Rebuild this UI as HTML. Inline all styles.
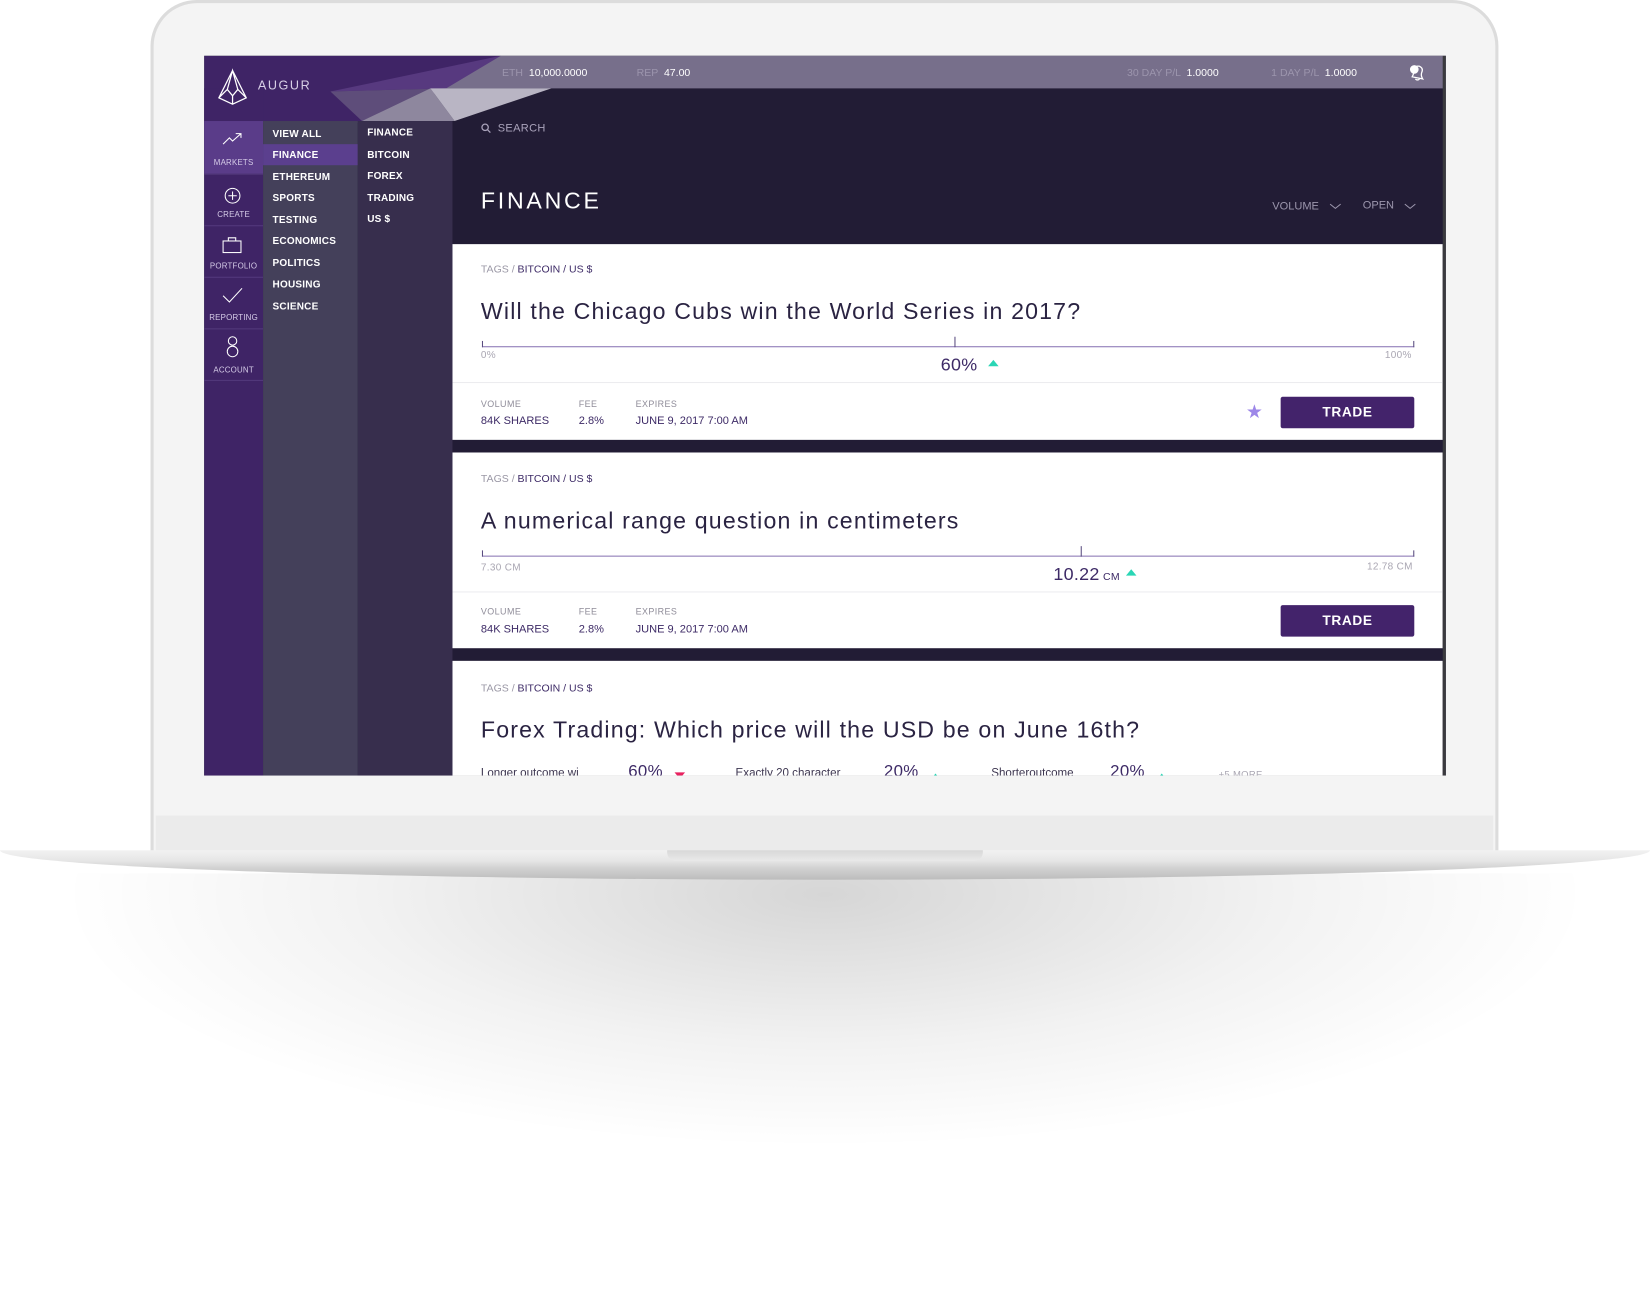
<!DOCTYPE html>
<html><head><meta charset="utf-8"><style>
*{margin:0;padding:0;box-sizing:border-box}
html,body{width:1650px;height:1296px;overflow:hidden;background:#fff;font-family:"Liberation Sans",sans-serif}
#w{position:absolute;left:0;top:0;width:1568px;height:1232px;transform:scale(1.0523);transform-origin:0 0}
.a{position:absolute}
.shadow{left:60px;top:830px;width:1448px;height:400px;background:radial-gradient(ellipse 50% 60% at 50% 5%,rgba(0,0,0,.16),rgba(0,0,0,.05) 60%,rgba(0,0,0,0) 100%)}
.lid{left:143px;top:0;width:1281px;height:812px;border-radius:44px 44px 0 0;background:#f4f4f4;border:3px solid #dcdcdc;border-bottom:none}
.chin{left:148px;top:775px;width:1271px;height:35px;background:#ebebeb}
.base{left:0;top:808px;width:1568px;height:28px;background:linear-gradient(#f2f2f2 0,#e6e6e6 35%,#d2d2d2 60%,#bcbcbc 100%);border-radius:0 0 50% 50%/0 0 100% 100%}
.notch{left:634px;top:808px;width:300px;height:10px;background:linear-gradient(#d8d8d8,#e9e9e9);border-radius:0 0 8px 8px}
.scr{left:194px;top:53px;width:1180px;height:684px;background:#221c35;overflow:hidden}
.t{position:absolute;white-space:nowrap;letter-spacing:.3px}
.cat{font-size:9.5px;font-weight:bold;color:#fff;letter-spacing:.2px}
.rail{font-size:7.5px;color:#d6cce8;letter-spacing:.2px;text-align:center;width:56px;left:0}
.lbl{font-size:8.5px;color:#8f8c99;letter-spacing:.4px}
.val{font-size:10.5px;color:#3d2a66;letter-spacing:0}
.q{font-size:22px;color:#2a2342;letter-spacing:1.1px}
.btn{position:absolute;width:127px;height:30px;background:#43236b;border-radius:2px;color:#fff;font-size:13px;font-weight:bold;letter-spacing:.6px;text-align:center;line-height:30px}
</style></head><body><div id="w">
<div class="a shadow"></div>
<div class="a lid"></div>
<div class="a chin"></div>
<div class="a base"></div>
<div class="a notch"></div>
<div class="a scr">
 <div class="a" style="left:0;top:0;width:1180px;height:31px;background:#776f8b"></div>
 <svg class="a" style="left:0;top:0" width="340" height="64">
  <polygon points="0,0 282,0 146,64 0,64" fill="#3f2466"/>
  <polygon points="120,34 282,0 230,31" fill="#57397f"/>
  <polygon points="120,34 230,31 150,62" fill="#5e4d7a"/>
  <polygon points="150,62 215,31 238,62" fill="#8e879e"/>
  <polygon points="215,31 330,31 238,62" fill="#b9b5c4"/>
 </svg>
 <div class="a" style="left:0;top:31px;width:56px;height:33px;background:#3f2466"></div>
 <svg class="a" style="left:10px;top:12px" width="34" height="36" viewBox="0 0 34 36" fill="none" stroke="#fff" stroke-width="1.2"><path d="M17 2 L30 28 L17 34 L4 28 Z M17 2 L12 20 L17 26 L22 20 Z M4 28 L12 20 M30 28 L22 20 M17 34 L17 26"/></svg>
 <div class="t" style="left:51px;top:21px;font-size:12px;color:#d8d0e6;letter-spacing:1.5px">AUGUR</div>
 <div class="t" style="left:283px;top:11px;font-size:10px;color:#9c95ad;letter-spacing:0">ETH <span style="color:#fff">&nbsp;10,000.0000</span></div>
 <div class="t" style="left:411px;top:11px;font-size:10px;color:#9c95ad;letter-spacing:0">REP <span style="color:#fff">&nbsp;47.00</span></div>
 <div class="t" style="left:877px;top:11px;font-size:10px;color:#9c95ad;letter-spacing:0">30 DAY P/L <span style="color:#fff">&nbsp;1.0000</span></div>
 <div class="t" style="left:1014px;top:11px;font-size:10px;color:#9c95ad;letter-spacing:0">1 DAY P/L <span style="color:#fff">&nbsp;1.0000</span></div>
 <svg class="a" style="left:1144px;top:7px" width="18" height="18" viewBox="0 0 18 18" fill="none" stroke="#fff" stroke-width="1.2"><path d="M4 13 Q6 9 6 6 Q7 2 11 3 Q15 5 13 9 Q12 12 14 15 Z M7 15 Q9 17 11 15"/><circle cx="6" cy="6" r="3.5" fill="#fff"/></svg>
 <div class="a" style="left:0;top:64px;width:56px;height:620px;background:#3f2466"></div>
 <div class="a" style="left:0;top:62px;width:56px;height:50px;background:#5a3c89"></div>
 <div class="a" style="left:0;top:112px;width:56px;height:1px;background:#53397c"></div>
 <div class="a" style="left:0;top:161px;width:56px;height:1px;background:#53397c"></div>
 <div class="a" style="left:0;top:210px;width:56px;height:1px;background:#53397c"></div>
 <div class="a" style="left:0;top:259px;width:56px;height:1px;background:#53397c"></div>
 <div class="a" style="left:0;top:308px;width:56px;height:1px;background:#53397c"></div>
 <svg class="a" style="left:17px;top:72px" width="20" height="14" fill="none" stroke="#fff" stroke-width="1"><path d="M1 12 L7 6 L10 9 L18 2 M13 2 L18 2 L18 6"/></svg>
 <div class="t rail" style="top:97px">MARKETS</div>
 <svg class="a" style="left:18px;top:124px" width="18" height="18" fill="none" stroke="#fff" stroke-width="1"><circle cx="9" cy="9" r="7"/><path d="M9 5V13M5 9H13"/></svg>
 <div class="t rail" style="top:146px">CREATE</div>
 <svg class="a" style="left:17px;top:171px" width="20" height="18" fill="none" stroke="#fff" stroke-width="1"><rect x="1" y="5" width="17" height="11"/><path d="M6 5V2H13V5"/></svg>
 <div class="t rail" style="top:195px">PORTFOLIO</div>
 <svg class="a" style="left:17px;top:220px" width="20" height="16" fill="none" stroke="#fff" stroke-width="1"><path d="M1 8 L7 14 L19 1"/></svg>
 <div class="t rail" style="top:244px">REPORTING</div>
 <svg class="a" style="left:19px;top:266px" width="16" height="22" fill="none" stroke="#fff" stroke-width="1"><circle cx="8" cy="5" r="4"/><circle cx="8" cy="15" r="5"/></svg>
 <div class="t rail" style="top:294px">ACCOUNT</div>
 <div class="a" style="left:56px;top:62px;width:90px;height:622px;background:#44405a"></div>
 <div class="a" style="left:56px;top:84px;width:90px;height:20px;background:#5b3f8e"></div>
 <div class="t cat" style="left:65px;top:69px">VIEW ALL</div>
 <div class="t cat" style="left:65px;top:89px">FINANCE</div>
 <div class="t cat" style="left:65px;top:110px">ETHEREUM</div>
 <div class="t cat" style="left:65px;top:130px">SPORTS</div>
 <div class="t cat" style="left:65px;top:151px">TESTING</div>
 <div class="t cat" style="left:65px;top:171px">ECONOMICS</div>
 <div class="t cat" style="left:65px;top:192px">POLITICS</div>
 <div class="t cat" style="left:65px;top:212px">HOUSING</div>
 <div class="t cat" style="left:65px;top:233px">SCIENCE</div>
 <div class="a" style="left:146px;top:62px;width:90px;height:622px;background:#372e4d"></div>
 <div class="t cat" style="left:155px;top:68px">FINANCE</div>
 <div class="t cat" style="left:155px;top:89px">BITCOIN</div>
 <div class="t cat" style="left:155px;top:109px">FOREX</div>
 <div class="t cat" style="left:155px;top:130px">TRADING</div>
 <div class="t cat" style="left:155px;top:150px">US $</div>
 <svg class="a" style="left:263px;top:64px" width="10" height="10" fill="none" stroke="#aaa3bb" stroke-width="1.2"><circle cx="4" cy="4" r="3"/><path d="M6 6L9 9"/></svg>
 <div class="t" style="left:279px;top:63px;font-size:10.5px;color:#aaa3bb">SEARCH</div>
 <div class="t" style="left:263px;top:125px;font-size:22px;color:#fff;letter-spacing:2.6px">FINANCE</div>
 <div class="t" style="left:1015px;top:137px;font-size:10.5px;color:#9c96ad;letter-spacing:0">VOLUME</div>
 <svg class="a" style="left:1069px;top:139px" width="12" height="8" fill="none" stroke="#9c96ad"><path d="M1 2L6 6L11 2"/></svg>
 <div class="t" style="left:1101px;top:136px;font-size:10.5px;color:#9c96ad;letter-spacing:0">OPEN</div>
 <svg class="a" style="left:1140px;top:139px" width="12" height="8" fill="none" stroke="#9c96ad"><path d="M1 2L6 6L11 2"/></svg>
 <div class="a" style="left:236px;top:179px;width:941px;height:186px;background:#fff"></div>
 <div class="a" style="left:236px;top:310px;width:941px;height:1px;background:#ececef"></div>
 <div class="t" style="left:263px;top:198px;font-size:10px;color:#9a97a5;letter-spacing:0">TAGS / <span style="color:#3d2a66">BITCOIN / US $</span></div>
 <div class="t q" style="left:263px;top:230px">Will the Chicago Cubs win the World Series in 2017?</div>
 <div class="a" style="left:264px;top:276px;width:886px;height:1px;background:#8a76b4"></div>
 <div class="a" style="left:264px;top:271px;width:1px;height:6px;background:#5a4d80"></div>
 <div class="a" style="left:713px;top:267px;width:1px;height:10px;background:#5a4d80"></div>
 <div class="a" style="left:1149px;top:271px;width:1px;height:6px;background:#5a4d80"></div>
 <div class="t" style="left:263px;top:279px;font-size:9.5px;color:#a9a6b2">0%</div>
 <div class="t" style="left:1122px;top:279px;font-size:9.5px;color:#a9a6b2">100%</div>
 <div class="t" style="left:700px;top:284px;font-size:17px;color:#3d2a66">60%</div>
 <div class="a" style="left:745px;top:289px;width:0;height:0;border-left:5px solid transparent;border-right:5px solid transparent;border-bottom:6px solid #2ad6b5"></div>
 <div class="t lbl" style="left:263px;top:326px">VOLUME</div><div class="t val" style="left:263px;top:341px">84K SHARES</div>
 <div class="t lbl" style="left:356px;top:326px">FEE</div><div class="t val" style="left:356px;top:341px">2.8%</div>
 <div class="t lbl" style="left:410px;top:326px">EXPIRES</div><div class="t val" style="left:410px;top:341px">JUNE 9, 2017 7:00 AM</div>
 <div class="t" style="left:990px;top:328px;font-size:18px;color:#9d87e8">★</div>
 <div class="btn" style="left:1023px;top:324px">TRADE</div>
 <div class="a" style="left:236px;top:377px;width:941px;height:186px;background:#fff"></div>
 <div class="a" style="left:236px;top:509px;width:941px;height:1px;background:#ececef"></div>
 <div class="t" style="left:263px;top:397px;font-size:10px;color:#9a97a5;letter-spacing:0">TAGS / <span style="color:#3d2a66">BITCOIN / US $</span></div>
 <div class="t q" style="left:263px;top:429px">A numerical range question in centimeters</div>
 <div class="a" style="left:264px;top:475px;width:886px;height:1px;background:#8a76b4"></div>
 <div class="a" style="left:264px;top:470px;width:1px;height:6px;background:#5a4d80"></div>
 <div class="a" style="left:833px;top:466px;width:1px;height:10px;background:#5a4d80"></div>
 <div class="a" style="left:1149px;top:470px;width:1px;height:6px;background:#5a4d80"></div>
 <div class="t" style="left:263px;top:481px;font-size:9.5px;color:#a9a6b2">7.30 CM</div>
 <div class="t" style="left:1105px;top:480px;font-size:9.5px;color:#a9a6b2">12.78 CM</div>
 <div class="t" style="left:807px;top:483px;font-size:17px;color:#3d2a66">10.22<span style="font-size:10px"> CM</span></div>
 <div class="a" style="left:876px;top:488px;width:0;height:0;border-left:5px solid transparent;border-right:5px solid transparent;border-bottom:6px solid #2ad6b5"></div>
 <div class="t lbl" style="left:263px;top:523px">VOLUME</div><div class="t val" style="left:263px;top:539px">84K SHARES</div>
 <div class="t lbl" style="left:356px;top:523px">FEE</div><div class="t val" style="left:356px;top:539px">2.8%</div>
 <div class="t lbl" style="left:410px;top:523px">EXPIRES</div><div class="t val" style="left:410px;top:539px">JUNE 9, 2017 7:00 AM</div>
 <div class="btn" style="left:1023px;top:522px">TRADE</div>
 <div class="a" style="left:236px;top:575px;width:941px;height:120px;background:#fff"></div>
 <div class="t" style="left:263px;top:596px;font-size:10px;color:#9a97a5;letter-spacing:0">TAGS / <span style="color:#3d2a66">BITCOIN / US $</span></div>
 <div class="t q" style="left:263px;top:628px">Forex Trading: Which price will the USD be on June 16th?</div>
 <div class="t" style="left:263px;top:676px;font-size:11px;color:#3d3650;letter-spacing:0">Longer outcome wi</div>
 <div class="t" style="left:403px;top:672px;font-size:16px;color:#3d2a66">60%</div>
 <div class="a" style="left:447px;top:681px;border-left:5px solid transparent;border-right:5px solid transparent;border-top:6px solid #e8215f"></div>
 <div class="t" style="left:505px;top:676px;font-size:11px;color:#3d3650;letter-spacing:0">Exactly 20 character</div>
 <div class="t" style="left:646px;top:672px;font-size:16px;color:#3d2a66">20%</div>
 <div class="a" style="left:692px;top:682px;border-left:3px solid transparent;border-right:3px solid transparent;border-bottom:4px solid #2ad6b5"></div>
 <div class="t" style="left:748px;top:676px;font-size:11px;color:#3d3650;letter-spacing:0">Shorteroutcome</div>
 <div class="t" style="left:861px;top:672px;font-size:16px;color:#3d2a66">20%</div>
 <div class="a" style="left:907px;top:682px;border-left:3px solid transparent;border-right:3px solid transparent;border-bottom:4px solid #2ad6b5"></div>
 <div class="t" style="left:964px;top:678px;font-size:9px;color:#a9a6b2">+5 MORE</div>
 <div class="a" style="left:1177px;top:0;width:3px;height:684px;background:#3a3a3e"></div>
</div>
</div></body></html>
